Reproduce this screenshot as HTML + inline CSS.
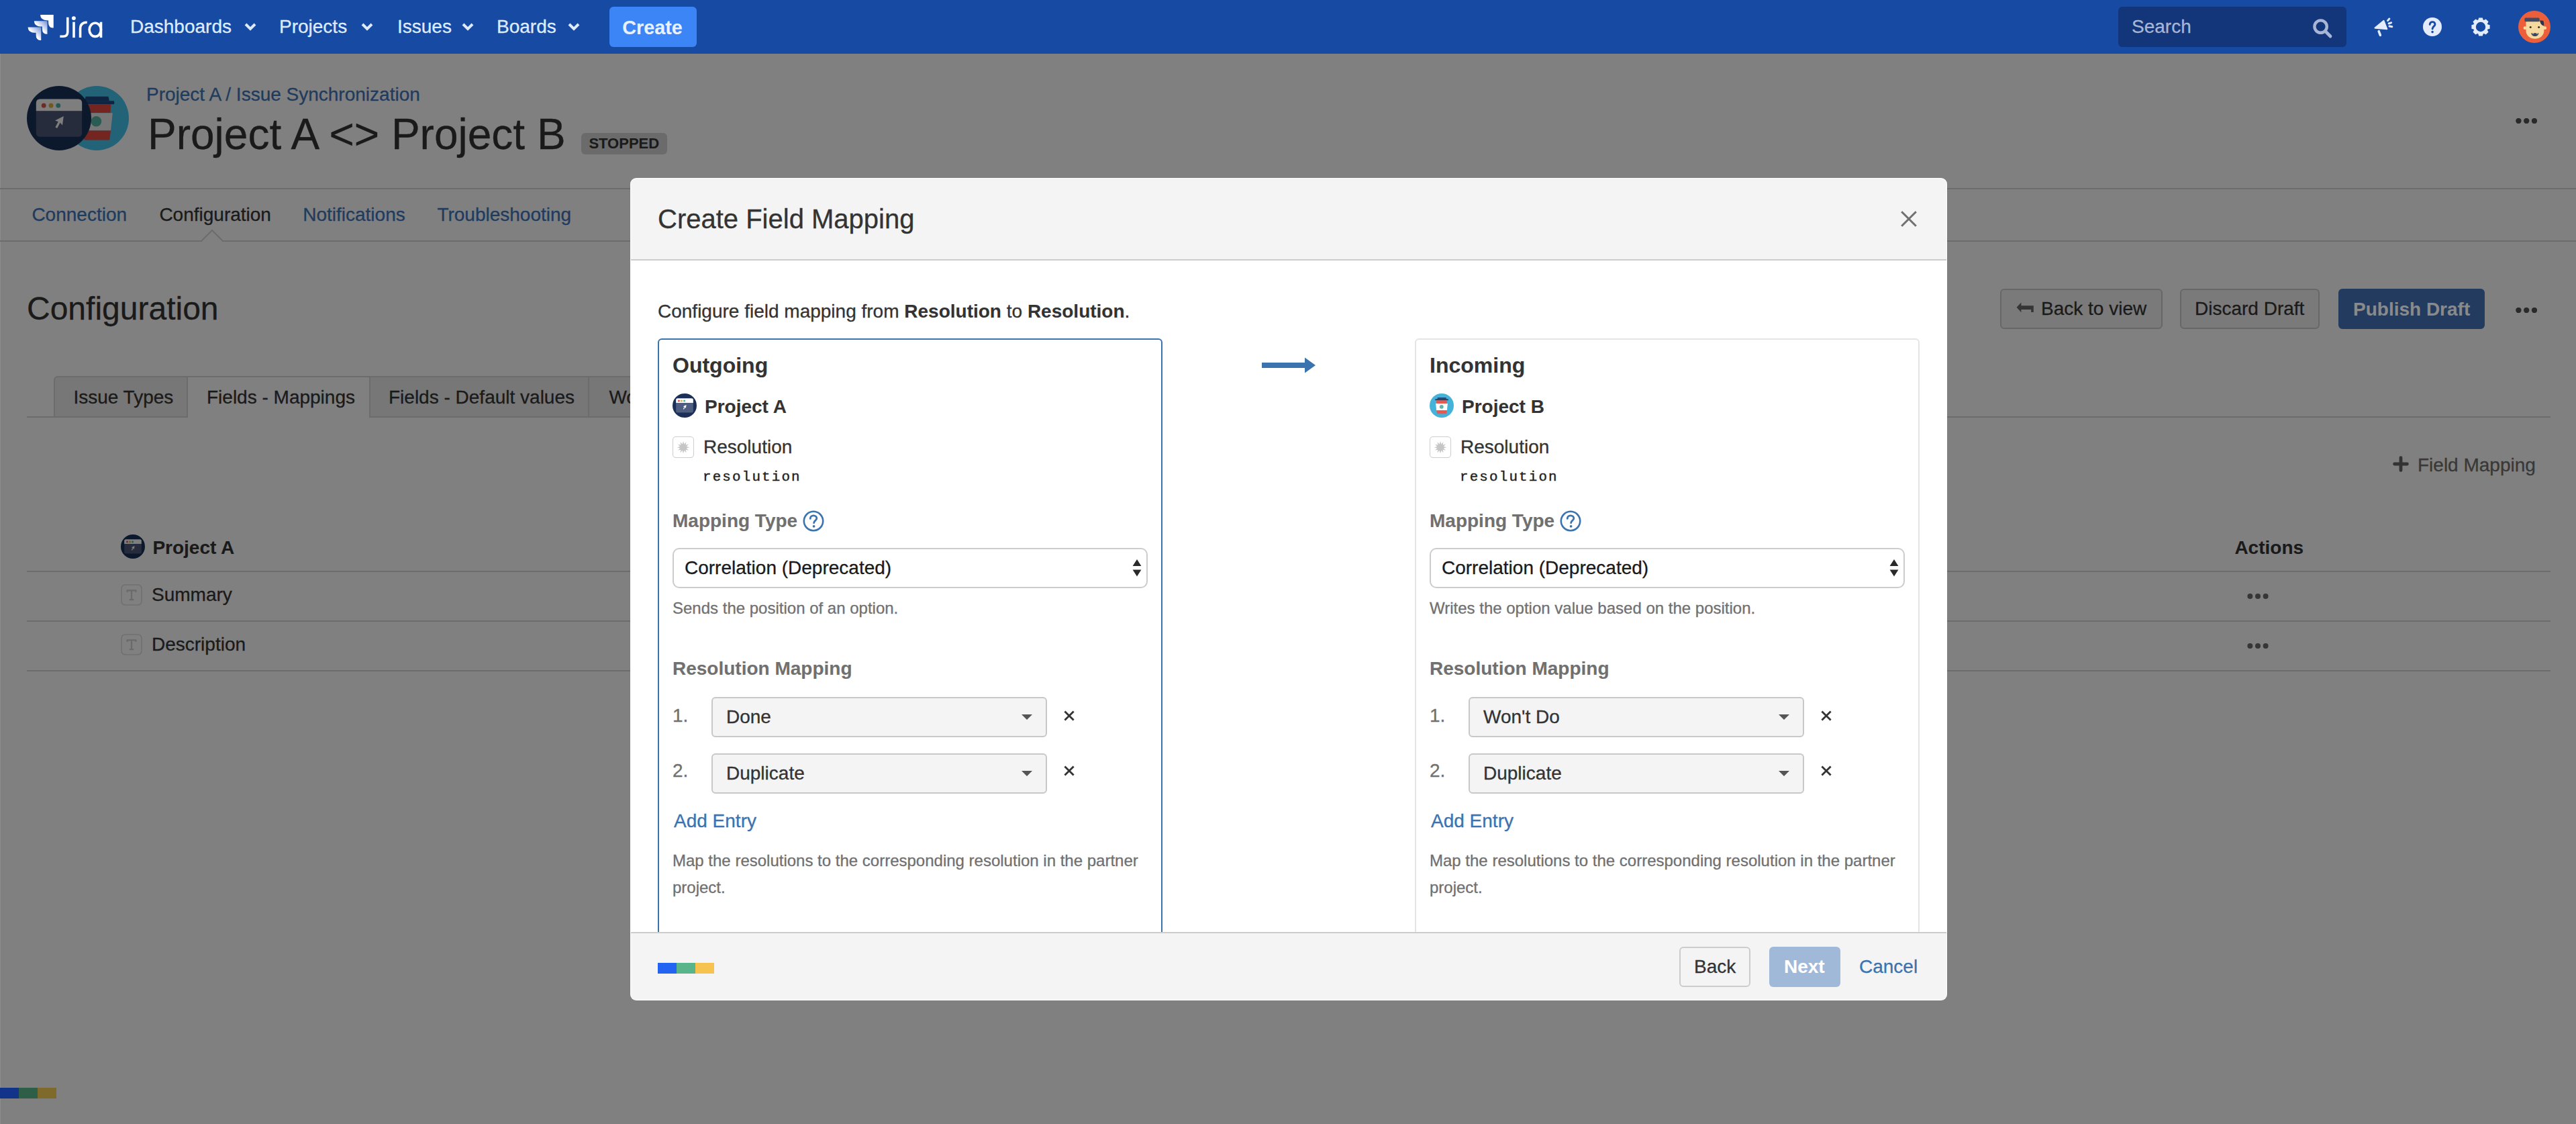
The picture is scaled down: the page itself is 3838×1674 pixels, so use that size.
<!DOCTYPE html>
<html><head><meta charset="utf-8">
<style>
html,body{margin:0;padding:0;background:#808080;overflow:hidden;}
body{width:3838px;height:1674px;}
#root{-webkit-text-stroke:0.15px currentColor;zoom:2;width:1919px;height:837px;position:relative;overflow:hidden;background:#808080;font-family:"Liberation Sans",sans-serif;color:#1a1a1a;}
.a{position:absolute;white-space:nowrap;}
b,[style*="font-weight:bold"]{-webkit-text-stroke:0.05px currentColor;}
.t14{font-size:14px;line-height:16px;}
/* nav */
#nav{position:absolute;left:0;top:0;width:1919px;height:40px;background:#174aa3;}
.nv{position:absolute;top:11px;font-size:14px;line-height:18px;color:#deebff;}
.chev{position:absolute;top:17px;width:9px;height:6px;}
/* page */
.link{color:#1f3b5e;}
.btn{position:absolute;top:215px;height:30px;box-sizing:border-box;border:1px solid #676767;border-radius:3px;background:#7a7a7a;}
.hr{position:absolute;height:1px;background:#6c6c6c;}
.dots{position:absolute;width:16px;height:4px;}
/* modal */
#modal{position:absolute;left:470px;top:133px;width:980px;height:611.5px;background:#fff;border-radius:4px;overflow:hidden;box-shadow:0 0 0 0.5px #fff;}
</style></head>
<body><div id="root">

<!-- NAV -->
<div id="nav">
  <svg class="a" style="left:15px;top:5px;width:70px;height:30px" viewBox="0 0 2576 1104">
    <defs>
      <linearGradient id="lg1" x1="1" y1="0" x2="0" y2="1"><stop offset="0" stop-color="#6f8fd6"/><stop offset="0.55" stop-color="#fff"/></linearGradient>
    </defs>
    <path d="M555,220 H915 V580 Q775,580 775,440 V375 Q555,375 555,220 Z" fill="#fff"/>
    <path d="M385,390 H745 V750 Q605,750 605,610 V545 Q385,545 385,390 Z" fill="url(#lg1)"/>
    <path d="M215,560 H575 V920 Q435,920 435,780 V715 Q215,715 215,560 Z" fill="url(#lg1)"/>
    <g stroke="#fff" stroke-width="66" fill="none">
      <path d="M1302,292 V690 C1302,785 1250,815 1175,815 H1092"/>
      <path d="M1472,418 V848"/>
      <path d="M1648,848 V610 C1648,485 1720,428 1835,428"/>
      <ellipse cx="2057" cy="632" rx="160" ry="185"/>
      <path d="M2217,418 V848"/>
    </g>
    <circle cx="1470" cy="315" r="55" fill="#fff"/>
  </svg>
  <div class="nv" style="left:97px">Dashboards</div>
  <svg class="chev" style="left:182px" viewBox="0 0 9 6"><path d="M1,1 L4.5,4.5 L8,1" stroke="#deebff" stroke-width="2" fill="none"/></svg>
  <div class="nv" style="left:208px">Projects</div>
  <svg class="chev" style="left:269px" viewBox="0 0 9 6"><path d="M1,1 L4.5,4.5 L8,1" stroke="#deebff" stroke-width="2" fill="none"/></svg>
  <div class="nv" style="left:296px">Issues</div>
  <svg class="chev" style="left:344px" viewBox="0 0 9 6"><path d="M1,1 L4.5,4.5 L8,1" stroke="#deebff" stroke-width="2" fill="none"/></svg>
  <div class="nv" style="left:370px">Boards</div>
  <svg class="chev" style="left:423px" viewBox="0 0 9 6"><path d="M1,1 L4.5,4.5 L8,1" stroke="#deebff" stroke-width="2" fill="none"/></svg>
  <div class="a" style="left:454px;top:5px;width:65px;height:30px;background:#3c85f7;border-radius:3px;"></div>
  <div class="nv" style="left:463.6px;top:11.6px;font-size:14.4px;font-weight:bold;color:#e9f1ff">Create</div>

  <div class="a" style="left:1578px;top:5px;width:170px;height:30px;background:#133579;border-radius:3px;"></div>
  <div class="nv" style="left:1588px;color:#a7b5d6">Search</div>
  <svg class="a" style="left:1722px;top:13px;width:16px;height:16px" viewBox="0 0 16 16"><circle cx="6.8" cy="6.8" r="4.6" stroke="#a7b5d6" stroke-width="2.2" fill="none"/><path d="M10.2,10.2 L14,14" stroke="#a7b5d6" stroke-width="2.4" stroke-linecap="round"/></svg>

  <svg class="a" style="left:1765px;top:9px;width:22px;height:22px" viewBox="0 0 22 22">
    <path d="M4.3,11.8 L10.7,6.5 L13.1,12.6 Z" fill="#e4ecfb" stroke="#e4ecfb" stroke-width="1.1" stroke-linejoin="round"/>
    <path d="M7.1,14.3 L8.2,17.2" stroke="#e4ecfb" stroke-width="1.8" stroke-linecap="round"/>
    <path d="M13.8,6.3 L14.9,5 M14.6,8.5 L16.3,7.9 M15,10.5 L16.9,10.9" stroke="#e4ecfb" stroke-width="1.5" stroke-linecap="round"/>
  </svg>
  <svg class="a" style="left:1805px;top:13px;width:14px;height:14px" viewBox="0 0 14 14"><circle cx="7" cy="7" r="7" fill="#e4ecfb"/><path d="M5.1,5.3 C5.1,4 6,3.3 7.05,3.3 C8.2,3.3 9,4.1 9,5.1 C9,6.5 7.05,6.7 7.05,8.5" stroke="#174aa3" stroke-width="1.45" fill="none" stroke-linecap="round"/><circle cx="7.05" cy="10.8" r="0.9" fill="#174aa3"/></svg>
  <svg class="a" style="left:1841px;top:13px;width:14px;height:14px" viewBox="0 0 14 14"><g fill="#e4ecfb"><circle cx="7" cy="7" r="5.5"/><path d="M5.6,0.2 H8.4 L8.9,2 H5.1 Z M5.6,13.8 H8.4 L8.9,12 H5.1 Z" /><path d="M5.6,0.2 H8.4 L8.9,2 H5.1 Z M5.6,13.8 H8.4 L8.9,12 H5.1 Z" transform="rotate(45 7 7)"/><path d="M5.6,0.2 H8.4 L8.9,2 H5.1 Z M5.6,13.8 H8.4 L8.9,12 H5.1 Z" transform="rotate(90 7 7)"/><path d="M5.6,0.2 H8.4 L8.9,2 H5.1 Z M5.6,13.8 H8.4 L8.9,12 H5.1 Z" transform="rotate(135 7 7)"/></g><circle cx="7" cy="7" r="3.6" fill="#174aa3"/></svg>
  <svg class="a" style="left:1876px;top:8px;width:24px;height:24px" viewBox="0 0 48 48">
    <circle cx="24" cy="24" r="24" fill="#ec5f3a"/>
    <path d="M11.5,16.1 H38.3 V30 C38.3,37 32,41.8 24.9,41.8 C17.8,41.8 11.5,37 11.5,30 Z" fill="#f6d9a0"/>
    <circle cx="10" cy="25.7" r="2.4" fill="#f6d9a0"/><circle cx="39.7" cy="25.7" r="2.4" fill="#f6d9a0"/>
    <rect x="9.4" y="10.4" width="22.2" height="5.9" rx="1.6" fill="#414b66"/>
    <path d="M32.2,14.5 H35 C37,14.5 38.3,16 38.3,18 V22.5 C35,22 32.5,19 32.2,14.5 Z" fill="#273452"/>
    <circle cx="18.2" cy="24.4" r="1.5" fill="#3a3020"/><circle cx="30.6" cy="24.4" r="1.5" fill="#3a3020"/>
    <path d="M19.4,33.2 H30.3 C30.3,36 28,38.1 24.85,38.1 C21.7,38.1 19.4,36 19.4,33.2 Z" fill="#3b4560"/>
    <path d="M21,33.2 L22,35.2 L23,33.2 Z M27,33.2 L28,35.2 L29,33.2 Z" fill="#fff"/>
  </svg>
</div>

<!-- PAGE -->
<div id="page">
  <div class="a" style="left:0;top:40px;width:0.5px;height:797px;background:#8c8c8c"></div>
  <!-- avatars -->
  <svg class="a" style="left:48px;top:64px;width:48px;height:48px" viewBox="0 0 48 48">
    <circle cx="24" cy="24" r="24" fill="#236378"/>
    <path d="M15.8,7.9 H32.7 L33.5,11.2 H15 Z" fill="#0f2440"/>
    <path d="M11.2,11.1 H36.9 Q37.5,12.4 36.9,13.6 H11.2 Z" fill="#0f2440"/>
    <path d="M13.3,13.6 H34.7 L34.2,20.1 H13.8 Z" fill="#74251f"/>
    <path d="M12.1,20.1 H35.9 L34.5,33.2 H13.5 Z" fill="#777"/>
    <circle cx="23.7" cy="26.4" r="3.9" fill="#2b5c54"/>
    <path d="M13.5,33.2 H34.5 L33.6,40.3 H14.8 Z" fill="#74251f"/>
  </svg>
  <svg class="a" style="left:20px;top:64px;width:48px;height:48px" viewBox="0 0 48 48">
    <circle cx="24" cy="24" r="24" fill="#0c182b"/>
    <path d="M6.9,12.7 Q6.9,9.7 9.9,9.7 H38.1 Q41.1,9.7 41.1,12.7 V18.8 H6.9 Z" fill="#7e7e7e"/>
    <path d="M6.9,18.8 H41.1 V34.9 Q41.1,37.9 38.1,37.9 H9.9 Q6.9,37.9 6.9,34.9 Z" fill="#272c3c"/>
    <circle cx="12.6" cy="14.6" r="1.7" fill="#6c2a28"/><circle cx="18" cy="14.6" r="1.7" fill="#70581f"/><circle cx="23.4" cy="14.6" r="1.7" fill="#275953"/>
    <path d="M27.4,22.5 L21,25.8 L23.4,26.6 L21.2,30.7 L22.6,31.5 L24.8,27.4 L26.5,29.2 Z" fill="#7e7e7e"/>
  </svg>
  <div class="a t14 link" style="left:109px;top:62.5px;">Project A / Issue Synchronization</div>
  <div class="a" style="left:110px;top:82px;font-size:32px;line-height:36px;color:#1a1a1a">Project A &lt;&gt; Project B</div>
  <div class="a" style="left:433px;top:99px;width:64px;height:16px;background:#6b6b6b;border-radius:3px;"></div>
  <div class="a" style="left:438.7px;top:101px;font-size:11px;line-height:12px;font-weight:bold;color:#1a1a1a">STOPPED</div>
  <svg class="dots" style="left:1874px;top:88px;" viewBox="0 0 16 4"><circle cx="2.2" cy="2" r="2.1" fill="#2a2a2a"/><circle cx="8.1" cy="2" r="2.1" fill="#2a2a2a"/><circle cx="14" cy="2" r="2.1" fill="#2a2a2a"/></svg>
  <div class="hr" style="left:0;top:140px;width:1919px;"></div>
  <!-- tabs -->
  <div class="a t14 link" style="left:23.7px;top:152px;">Connection</div>
  <div class="a t14" style="left:118.7px;top:152px;color:#1a1a1a">Configuration</div>
  <div class="a t14 link" style="left:225.6px;top:152px;">Notifications</div>
  <div class="a t14 link" style="left:325.7px;top:152px;">Troubleshooting</div>
  <svg class="a" style="left:0;top:170px;width:1919px;height:10px" viewBox="0 0 1919 10"><path d="M0,9.5 H150 L158,1.5 L166,9.5 H1919" stroke="#6c6c6c" stroke-width="1" fill="none"/></svg>
  <!-- config header -->
  <div class="a" style="left:20px;top:216px;font-size:24px;line-height:28px;color:#1a1a1a">Configuration</div>
  <div class="btn" style="left:1490px;width:121px;"></div>
  <svg class="a" style="left:1495px;top:220px;width:22px;height:16px" viewBox="0 0 22 16"><path d="M7.3,8.9 L10.7,5.2 V7.6 H19.9 V12.5 H18.1 V10.5 H10.7 V12.6 Z" fill="#353535"/></svg>
  <div class="a t14" style="left:1520.5px;top:222px;">Back to view</div>
  <div class="btn" style="left:1624px;width:104px;"></div>
  <div class="a t14" style="left:1635px;top:222px;">Discard Draft</div>
  <div class="btn" style="left:1742px;width:109px;background:#223b5f;border-color:#223b5f"></div>
  <div class="a t14" style="left:1753px;top:222.5px;font-weight:bold;color:#8a8a8a">Publish Draft</div>
  <svg class="dots" style="left:1874px;top:229px;" viewBox="0 0 16 4"><circle cx="2.2" cy="2" r="2.1" fill="#2a2a2a"/><circle cx="8.1" cy="2" r="2.1" fill="#2a2a2a"/><circle cx="14" cy="2" r="2.1" fill="#2a2a2a"/></svg>
  <!-- sub tabs -->
  <div class="hr" style="left:20px;top:310px;width:1880px;"></div>
  <div class="a" style="left:40px;top:280px;width:100px;height:30px;box-sizing:border-box;border:1px solid #6c6c6c;border-bottom:none;border-top-left-radius:3px;background:#777;"></div>
  <div class="a" style="left:140px;top:280px;width:135px;height:31px;box-sizing:border-box;border-top:1px solid #6c6c6c;background:#808080;"></div>
  <div class="a" style="left:275px;top:280px;width:164px;height:30px;box-sizing:border-box;border:1px solid #6c6c6c;border-bottom:none;background:#777;"></div>
  <div class="a" style="left:439px;top:280px;width:100px;height:30px;box-sizing:border-box;border-top:1px solid #6c6c6c;background:#777;"></div>
  <div class="a t14" style="left:54.7px;top:288px;">Issue Types</div>
  <div class="a t14" style="left:154px;top:288px;">Fields - Mappings</div>
  <div class="a t14" style="left:289.5px;top:288px;">Fields - Default values</div>
  <div class="a t14" style="left:453.7px;top:288px;">Workflows</div>
  <!-- field mapping -->
  <svg class="a" style="left:1782.5px;top:339.5px;width:12px;height:12px" viewBox="0 0 12 12"><path d="M6,1.3 V10.7 M1.3,6 H10.7" stroke="#333" stroke-width="2.4" stroke-linecap="round"/></svg>
  <div class="a t14" style="left:1801px;top:338.3px;color:#383838">Field Mapping</div>
  <!-- table -->
  <svg class="a" style="left:90px;top:398px;width:18px;height:18px" viewBox="0 0 48 48">
    <circle cx="24" cy="24" r="24" fill="#0c182b"/>
    <path d="M6.9,12.7 Q6.9,9.7 9.9,9.7 H38.1 Q41.1,9.7 41.1,12.7 V18.8 H6.9 Z" fill="#7e7e7e"/>
    <path d="M6.9,18.8 H41.1 V34.9 Q41.1,37.9 38.1,37.9 H9.9 Q6.9,37.9 6.9,34.9 Z" fill="#272c3c"/>
    <circle cx="12.6" cy="14.6" r="1.9" fill="#6c2a28"/><circle cx="18" cy="14.6" r="1.9" fill="#70581f"/><circle cx="23.4" cy="14.6" r="1.9" fill="#275953"/>
    <path d="M27.4,22.5 L21,25.8 L23.4,26.6 L21.2,30.7 L22.6,31.5 L24.8,27.4 L26.5,29.2 Z" fill="#7e7e7e"/>
  </svg>
  <div class="a t14" style="left:113.7px;top:400px;font-weight:bold">Project A</div>
  <div class="a t14" style="left:1664.7px;top:400px;font-weight:bold">Actions</div>
  <div class="hr" style="left:20px;top:425px;width:1880px;"></div>
  <div class="hr" style="left:20px;top:462px;width:1880px;"></div>
  <div class="hr" style="left:20px;top:499px;width:1880px;"></div>
  <svg class="a" style="left:90px;top:435px;width:16px;height:16px" viewBox="0 0 16 16"><rect x="0.5" y="0.5" width="15" height="15" rx="2.8" fill="none" stroke="#707070" stroke-width="0.8"/><path d="M4.8,6 V4.7 H11.2 V6 M8,4.7 V11.6 M6.4,11.6 H9.6" stroke="#6a6a6a" stroke-width="1.1" fill="none"/></svg>
  <div class="a t14" style="left:113px;top:435px;">Summary</div>
  <svg class="a" style="left:90px;top:472px;width:16px;height:16px" viewBox="0 0 16 16"><rect x="0.5" y="0.5" width="15" height="15" rx="2.8" fill="none" stroke="#707070" stroke-width="0.8"/><path d="M4.8,6 V4.7 H11.2 V6 M8,4.7 V11.6 M6.4,11.6 H9.6" stroke="#6a6a6a" stroke-width="1.1" fill="none"/></svg>
  <div class="a t14" style="left:113px;top:472px;">Description</div>
  <svg class="dots" style="left:1674px;top:442px;" viewBox="0 0 16 4"><circle cx="2.2" cy="2" r="2" fill="#363636"/><circle cx="8" cy="2" r="2" fill="#363636"/><circle cx="13.8" cy="2" r="2" fill="#363636"/></svg>
  <svg class="dots" style="left:1674px;top:479px;" viewBox="0 0 16 4"><circle cx="2.2" cy="2" r="2" fill="#363636"/><circle cx="8" cy="2" r="2" fill="#363636"/><circle cx="13.8" cy="2" r="2" fill="#363636"/></svg>
  <div class="a" style="left:0;top:810px;width:14px;height:8px;background:#11338a"></div>
  <div class="a" style="left:14px;top:810px;width:14px;height:8px;background:#2e5e48"></div>
  <div class="a" style="left:28px;top:810px;width:14px;height:8px;background:#7f6a2c"></div>
</div>



<!-- MODAL -->
<div id="modal">
  <div class="a" style="left:0;top:0;width:980px;height:60px;background:#f4f4f4;border-bottom:1px solid #ccc;"></div>
  <div class="a" style="left:20px;top:18px;font-size:20px;line-height:24px;color:#333">Create Field Mapping</div>
  <svg class="a" style="left:946px;top:24px;width:12px;height:12px" viewBox="0 0 12 12"><path d="M0.6,0.6 L11.4,11.4 M11.4,0.6 L0.6,11.4" stroke="#707070" stroke-width="1.5"/></svg>
  <div class="a t14" style="left:20px;top:91px;color:#333">Configure field mapping from <b>Resolution</b> to <b>Resolution</b>.</div>
  
  <div class="a" style="left:20px;top:119px;width:376px;height:600px;box-sizing:border-box;border:1px solid #3b73af;border-radius:3px;"></div>
  <div class="a" style="left:31px;top:129px;font-size:16px;line-height:20px;font-weight:bold;color:#333">Outgoing</div>
  <svg class="a" style="left:31px;top:160px;width:18px;height:18px" viewBox="0 0 48 48"><circle cx="24" cy="24" r="24" fill="#1b2f57"/>
    <path d="M6.9,12.7 Q6.9,9.7 9.9,9.7 H38.1 Q41.1,9.7 41.1,12.7 V18.8 H6.9 Z" fill="#fff"/>
    <path d="M6.9,18.8 H41.1 V34.9 Q41.1,37.9 38.1,37.9 H9.9 Q6.9,37.9 6.9,34.9 Z" fill="#4e5d80"/>
    <circle cx="12.6" cy="14.6" r="2" fill="#d9534f"/><circle cx="18" cy="14.6" r="2" fill="#e0b040"/><circle cx="23.4" cy="14.6" r="2" fill="#4fb3a9"/>
    <path d="M27.4,22.5 L21,25.8 L23.4,26.6 L21.2,30.7 L22.6,31.5 L24.8,27.4 L26.5,29.2 Z" fill="#fff"/></svg>
  <div class="a t14" style="left:55px;top:162px;font-weight:bold;color:#333">Project A</div>
  <svg class="a" style="left:31px;top:192px;width:16px;height:16px" viewBox="0 0 16 16"><rect x="0.25" y="0.25" width="15.5" height="15.5" rx="2.2" fill="#fff" stroke="#cfcfcf" stroke-width="0.55"/><path d="M8.00,3.50 L8.65,5.69 L10.30,4.12 L9.77,6.33 L11.98,5.80 L10.41,7.45 L12.60,8.10 L10.41,8.75 L11.98,10.40 L9.77,9.87 L10.30,12.08 L8.65,10.51 L8.00,12.70 L7.35,10.51 L5.70,12.08 L6.23,9.87 L4.02,10.40 L5.59,8.75 L3.40,8.10 L5.59,7.45 L4.02,5.80 L6.23,6.33 L5.70,4.12 L7.35,5.69 Z" fill="#c6c6c6"/></svg>
  <div class="a t14" style="left:54px;top:192px;color:#333">Resolution</div>
  <div class="a" style="left:53.5px;top:216.4px;font-family:'Liberation Mono',monospace;font-size:10.4px;letter-spacing:1.1px;line-height:12px;color:#222;-webkit-text-stroke:0.2px #222">resolution</div>
  <div class="a t14" style="left:31px;top:247px;font-weight:bold;color:#707070">Mapping Type</div>
  <svg class="a" style="left:128px;top:247px;width:16px;height:16px" viewBox="0 0 16 16"><circle cx="8" cy="8" r="7.1" fill="none" stroke="#3b73af" stroke-width="1.3"/><path d="M5.6,6.2 C5.6,4.7 6.7,3.9 8,3.9 C9.4,3.9 10.4,4.8 10.4,6 C10.4,7.5 8.3,7.6 8.3,9.4" stroke="#3b73af" stroke-width="1.4" fill="none" stroke-linecap="round"/><circle cx="8.3" cy="11.9" r="0.95" fill="#3b73af"/></svg>
  <div class="a" style="left:31px;top:275px;width:354px;height:30px;box-sizing:border-box;border:1px solid #ccc;border-radius:5px;background:#fff"></div>
  <div class="a t14" style="left:40px;top:282px;color:#1a1a1a">Correlation (Deprecated)</div>
  <svg class="a" style="left:373.2px;top:283px;width:8px;height:14px" viewBox="0 0 8 14"><path d="M0.8,5.5 L4,0.5 L7.2,5.5 Z M0.8,8.2 L4,13.3 L7.2,8.2 Z" fill="#2a2a2a"/></svg>
  <div class="a" style="left:31px;top:313px;font-size:12px;line-height:14px;color:#707070">Sends the position of an option.</div>
  <div class="a t14" style="left:31px;top:357px;font-weight:bold;color:#707070">Resolution Mapping</div>
  <div class="a t14" style="left:31px;top:392px;color:#707070">1.</div>
  <div class="a" style="left:60px;top:386px;width:250px;height:30px;box-sizing:border-box;border:1px solid #c8c8c8;border-radius:3px;background:#f4f4f4"></div>
  <div class="a t14" style="left:71px;top:393px;color:#333">Done</div>
  <svg class="a" style="left:291px;top:399px;width:8px;height:4px" viewBox="0 0 8 4"><path d="M0,0 H8 L4,4 Z" fill="#555"/></svg>
  <svg class="a" style="left:322.5px;top:396px;width:8px;height:8px" viewBox="0 0 8 8"><path d="M0.7,0.7 L7.3,7.3 M7.3,0.7 L0.7,7.3" stroke="#333" stroke-width="1.4"/></svg>
  <div class="a t14" style="left:31px;top:433px;color:#707070">2.</div>
  <div class="a" style="left:60px;top:428px;width:250px;height:30px;box-sizing:border-box;border:1px solid #c8c8c8;border-radius:3px;background:#f4f4f4"></div>
  <div class="a t14" style="left:71px;top:435px;color:#333">Duplicate</div>
  <svg class="a" style="left:291px;top:441px;width:8px;height:4px" viewBox="0 0 8 4"><path d="M0,0 H8 L4,4 Z" fill="#555"/></svg>
  <svg class="a" style="left:322.5px;top:437px;width:8px;height:8px" viewBox="0 0 8 8"><path d="M0.7,0.7 L7.3,7.3 M7.3,0.7 L0.7,7.3" stroke="#333" stroke-width="1.4"/></svg>
  <div class="a t14" style="left:32px;top:470.5px;color:#3b73af">Add Entry</div>
  <div class="a" style="left:31px;top:498px;width:356px;white-space:normal;font-size:12px;line-height:20px;color:#707070">Map the resolutions to the corresponding resolution in the partner project.</div>

  <svg class="a" style="left:470px;top:133px;width:40px;height:12px" viewBox="0 0 40 12"><path d="M0,4 H32 V0.2 L40,6 L32,11.8 V8 H0 Z" fill="#3b73af"/></svg>
  
  <div class="a" style="left:584px;top:119px;width:376px;height:600px;box-sizing:border-box;border:1px solid #e4e4e4;border-radius:3px;"></div>
  <div class="a" style="left:595px;top:129px;font-size:16px;line-height:20px;font-weight:bold;color:#333">Incoming</div>
  <svg class="a" style="left:595px;top:160px;width:18px;height:18px" viewBox="0 0 48 48"><circle cx="24" cy="24" r="24" fill="#45b3d9"/>
    <path d="M15.8,7.9 H32.7 L33.5,11.2 H15 Z" fill="#1f4a7a"/>
    <path d="M11.2,11.1 H36.9 Q37.5,12.4 36.9,13.6 H11.2 Z" fill="#1f3f66"/>
    <path d="M13.3,13.6 H34.7 L34.2,20.1 H13.8 Z" fill="#e85a4f"/>
    <path d="M12.1,20.1 H35.9 L34.5,33.2 H13.5 Z" fill="#fff"/>
    <circle cx="23.7" cy="26.4" r="3.9" fill="#5ab8a8"/>
    <path d="M13.5,33.2 H34.5 L33.6,40.3 H14.8 Z" fill="#e85a4f"/></svg>
  <div class="a t14" style="left:619px;top:162px;font-weight:bold;color:#333">Project B</div>
  <svg class="a" style="left:595px;top:192px;width:16px;height:16px" viewBox="0 0 16 16"><rect x="0.25" y="0.25" width="15.5" height="15.5" rx="2.2" fill="#fff" stroke="#cfcfcf" stroke-width="0.55"/><path d="M8.00,3.50 L8.65,5.69 L10.30,4.12 L9.77,6.33 L11.98,5.80 L10.41,7.45 L12.60,8.10 L10.41,8.75 L11.98,10.40 L9.77,9.87 L10.30,12.08 L8.65,10.51 L8.00,12.70 L7.35,10.51 L5.70,12.08 L6.23,9.87 L4.02,10.40 L5.59,8.75 L3.40,8.10 L5.59,7.45 L4.02,5.80 L6.23,6.33 L5.70,4.12 L7.35,5.69 Z" fill="#c6c6c6"/></svg>
  <div class="a t14" style="left:618px;top:192px;color:#333">Resolution</div>
  <div class="a" style="left:617.5px;top:216.4px;font-family:'Liberation Mono',monospace;font-size:10.4px;letter-spacing:1.1px;line-height:12px;color:#222;-webkit-text-stroke:0.2px #222">resolution</div>
  <div class="a t14" style="left:595px;top:247px;font-weight:bold;color:#707070">Mapping Type</div>
  <svg class="a" style="left:692px;top:247px;width:16px;height:16px" viewBox="0 0 16 16"><circle cx="8" cy="8" r="7.1" fill="none" stroke="#3b73af" stroke-width="1.3"/><path d="M5.6,6.2 C5.6,4.7 6.7,3.9 8,3.9 C9.4,3.9 10.4,4.8 10.4,6 C10.4,7.5 8.3,7.6 8.3,9.4" stroke="#3b73af" stroke-width="1.4" fill="none" stroke-linecap="round"/><circle cx="8.3" cy="11.9" r="0.95" fill="#3b73af"/></svg>
  <div class="a" style="left:595px;top:275px;width:354px;height:30px;box-sizing:border-box;border:1px solid #ccc;border-radius:5px;background:#fff"></div>
  <div class="a t14" style="left:604px;top:282px;color:#1a1a1a">Correlation (Deprecated)</div>
  <svg class="a" style="left:937.2px;top:283px;width:8px;height:14px" viewBox="0 0 8 14"><path d="M0.8,5.5 L4,0.5 L7.2,5.5 Z M0.8,8.2 L4,13.3 L7.2,8.2 Z" fill="#2a2a2a"/></svg>
  <div class="a" style="left:595px;top:313px;font-size:12px;line-height:14px;color:#707070">Writes the option value based on the position.</div>
  <div class="a t14" style="left:595px;top:357px;font-weight:bold;color:#707070">Resolution Mapping</div>
  <div class="a t14" style="left:595px;top:392px;color:#707070">1.</div>
  <div class="a" style="left:624px;top:386px;width:250px;height:30px;box-sizing:border-box;border:1px solid #c8c8c8;border-radius:3px;background:#f4f4f4"></div>
  <div class="a t14" style="left:635px;top:393px;color:#333">Won't Do</div>
  <svg class="a" style="left:855px;top:399px;width:8px;height:4px" viewBox="0 0 8 4"><path d="M0,0 H8 L4,4 Z" fill="#555"/></svg>
  <svg class="a" style="left:886.5px;top:396px;width:8px;height:8px" viewBox="0 0 8 8"><path d="M0.7,0.7 L7.3,7.3 M7.3,0.7 L0.7,7.3" stroke="#333" stroke-width="1.4"/></svg>
  <div class="a t14" style="left:595px;top:433px;color:#707070">2.</div>
  <div class="a" style="left:624px;top:428px;width:250px;height:30px;box-sizing:border-box;border:1px solid #c8c8c8;border-radius:3px;background:#f4f4f4"></div>
  <div class="a t14" style="left:635px;top:435px;color:#333">Duplicate</div>
  <svg class="a" style="left:855px;top:441px;width:8px;height:4px" viewBox="0 0 8 4"><path d="M0,0 H8 L4,4 Z" fill="#555"/></svg>
  <svg class="a" style="left:886.5px;top:437px;width:8px;height:8px" viewBox="0 0 8 8"><path d="M0.7,0.7 L7.3,7.3 M7.3,0.7 L0.7,7.3" stroke="#333" stroke-width="1.4"/></svg>
  <div class="a t14" style="left:596px;top:470.5px;color:#3b73af">Add Entry</div>
  <div class="a" style="left:595px;top:498px;width:356px;white-space:normal;font-size:12px;line-height:20px;color:#707070">Map the resolutions to the corresponding resolution in the partner project.</div>

  <div class="a" style="left:0;top:561px;width:980px;height:51px;background:#f4f4f4;border-top:1px solid #ccc;box-sizing:border-box;height:50.5px;"></div>
  <div class="a" style="left:20px;top:584px;width:14px;height:8px;background:#2363f2"></div>
  <div class="a" style="left:34px;top:584px;width:14px;height:8px;background:#59b48a"></div>
  <div class="a" style="left:48px;top:584px;width:14px;height:8px;background:#f5c34e"></div>
  <div class="a" style="left:781px;top:572px;width:53px;height:30px;box-sizing:border-box;border:1px solid #ccc;border-radius:3px;background:#f4f4f4"></div>
  <div class="a t14" style="left:792px;top:579px;color:#333">Back</div>
  <div class="a" style="left:848px;top:572px;width:53px;height:30px;border-radius:3px;background:#a1b9d8"></div>
  <div class="a t14" style="left:859px;top:579px;color:#fff;font-weight:bold">Next</div>
  <div class="a t14" style="left:915px;top:579px;color:#3b73af">Cancel</div>
</div>

</div></body></html>
